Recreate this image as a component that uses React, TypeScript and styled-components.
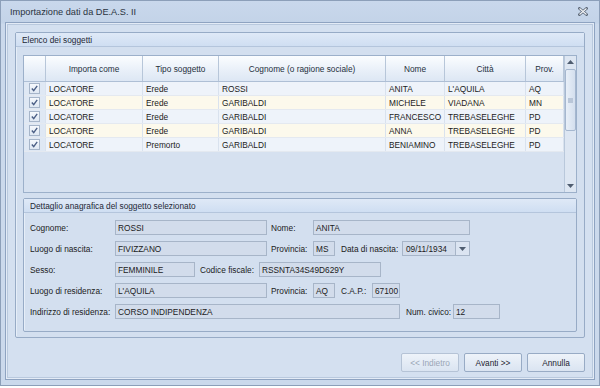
import { ReactNode } from "react";
import styled, { createGlobalStyle } from "styled-components";

const GlobalStyle = createGlobalStyle`
  html, body {
    margin: 0;
    padding: 0;
    background: #ffffff;
  }
  body {
    font-family: "Liberation Sans", Arial, sans-serif;
    font-size: 8.3px;
    color: #1b1b1b;
  }
`;

const Window = styled.div`
  width: 600px;
  height: 386px;
  box-sizing: border-box;
  border: 1px solid #8c9fb9;
  background: linear-gradient(#c9d8ec, #c3d3e8 22px, #cbd9ec 23px);
  display: flex;
  flex-direction: column;
`;

const TitleBar = styled.div`
  height: 21px;
  display: flex;
  align-items: center;
  justify-content: space-between;
  padding: 0 9px 0 9px;
  font-size: 9.2px;
  color: #2a3340;
`;

const CloseButton = styled.div`
  width: 12px;
  height: 12px;
  display: flex;
  align-items: center;
  justify-content: center;
  margin-right: 1px;
`;

const Body = styled.div`
  flex: 1;
  margin: 0 4px 5px 4px;
  border: 1px solid #8ea3c1;
  box-shadow: inset 0 0 0 1px #e3ebf6, inset 0 0 0 2px #b9c9de;
  background: #d4e0f0;
  display: flex;
  flex-direction: column;
  padding: 9px 9px 7px 9px;
`;

const Group = styled.div`
  border: 1px solid #97abc6;
  border-radius: 2px;
  background: #d3dfef;
  box-shadow: inset 1px 1px 0 #e6eef8;
  display: flex;
  flex-direction: column;
`;

const GroupHeader = styled.div`
  height: 13px;
  display: flex;
  align-items: center;
  padding-left: 6px;
  background: linear-gradient(#dfe9f7, #cfdef2);
  border-bottom: 1px solid #b4c5dc;
  color: #1e2835;
`;

const ListArea = styled.div`
  padding: 8px 7px 5px 7px;
  display: flex;
  flex-direction: column;
  gap: 5px;
`;

const GridBox = styled.div`
  height: 136px;
  border: 1px solid #9cb0ca;
  background: #d6e1f0;
  display: flex;
`;

const Table = styled.div`
  flex: 1;
  display: flex;
  flex-direction: column;
`;

const cols = "22px 97px 76px 167px 59px 81px 38px";

const HeaderRow = styled.div`
  display: grid;
  grid-template-columns: ${cols};
  height: 25px;
  background: linear-gradient(#fbfdff, #e8eff8 60%, #dde7f4);
  border-bottom: 1px solid #aebfd5;
`;

const HeaderCell = styled.div`
  display: flex;
  align-items: center;
  justify-content: center;
  border-right: 1px solid #b7c6d9;
  color: #25303d;
`;

const Row = styled.div<{ $alt: boolean }>`
  display: grid;
  grid-template-columns: ${cols};
  height: 14px;
  background: ${(p) => (p.$alt ? "#fcf9ec" : "#eef3fa")};
  border-bottom: 1px solid #e4e9f0;
  box-sizing: border-box;
`;

const Cell = styled.div<{ $first?: boolean }>`
  display: flex;
  align-items: center;
  justify-content: ${(p) => (p.$first ? "center" : "flex-start")};
  padding-left: ${(p) => (p.$first ? "0" : "3px")};
  border-right: 1px solid #d9e2ee;
  white-space: nowrap;
  overflow: hidden;
  background: ${(p) => (p.$first ? "#dfe8f4" : "transparent")};
`;

const Check = styled.div`
  width: 9px;
  height: 9px;
  border: 1px solid #a6b5c9;
  background: linear-gradient(#f6f9fd, #dfe8f3);
  display: flex;
  align-items: center;
  justify-content: center;
`;

const ScrollBar = styled.div`
  width: 12px;
  border-left: 1px solid #b9c8db;
  background: #dde6f2;
  display: flex;
  flex-direction: column;
  align-items: center;
`;

const ScrollArrow = styled.div`
  height: 12px;
  display: flex;
  align-items: center;
  justify-content: center;
`;

const ScrollThumb = styled.div`
  margin-top: 1px;
  width: 9px;
  height: 60px;
  border: 1px solid #a5b7cf;
  border-radius: 2px;
  background: linear-gradient(90deg, #e8eff8, #d4dfee);
  display: flex;
  align-items: center;
  justify-content: center;
`;

const ScrollTrack = styled.div`
  flex: 1;
`;

const Detail = styled(Group)`
  height: 132px;
`;

const Fields = styled.div`
  padding: 7px 6px;
  display: flex;
  flex-direction: column;
  gap: 6px;
`;

const FieldRow = styled.div`
  display: flex;
  align-items: center;
  height: 15px;
`;

const Label = styled.div<{ $w: number; $ml?: number }>`
  width: ${(p) => p.$w}px;
  margin-left: ${(p) => p.$ml ?? 0}px;
  white-space: nowrap;
  flex-shrink: 0;
`;

const Input = styled.div<{ $w: number }>`
  width: ${(p) => p.$w}px;
  height: 15px;
  box-sizing: border-box;
  border: 1px solid #a7b5c8;
  background: #d2dceb;
  display: flex;
  align-items: center;
  padding-left: 2px;
  white-space: nowrap;
  flex-shrink: 0;
`;

const DateInput = styled(Input)`
  padding-left: 0;
  justify-content: space-between;
  span {
    padding-left: 3px;
  }
`;

const DropButton = styled.div`
  width: 13px;
  height: 13px;
  border-left: 1px solid #a7b5c8;
  display: flex;
  align-items: center;
  justify-content: center;
  background: #dbe4f1;
`;

const ButtonBar = styled.div`
  margin-top: auto;
  display: flex;
  justify-content: flex-end;
  gap: 5px;
`;

const Button = styled.button<{ $disabled?: boolean }>`
  width: 58px;
  height: 19px;
  border: 1px solid ${(p) => (p.$disabled ? "#b5c3d6" : "#98abc5")};
  border-radius: 2px;
  background: linear-gradient(#eef3fa, #dae4f1);
  font-family: inherit;
  font-size: 8.3px;
  color: ${(p) => (p.$disabled ? "#9aa6b6" : "#1c2430")};
  padding: 0;
`;

const DownArrow = () => (
  <svg width="7" height="4" viewBox="0 0 7 4">
    <path d="M0 0h7L3.5 4z" fill="#4f5d70" />
  </svg>
);

const UpArrow = () => (
  <svg width="7" height="4" viewBox="0 0 7 4">
    <path d="M0 4h7L3.5 0z" fill="#4f5d70" />
  </svg>
);

const CheckMark = () => (
  <svg width="7" height="7" viewBox="0 0 7 7">
    <path d="M0.8 3.6 L2.7 5.6 L6.2 0.9" stroke="#4b5f86" strokeWidth="1.4" fill="none" />
  </svg>
);

const CloseIcon = () => (
  <svg width="10" height="9" viewBox="0 0 10 9">
    <path d="M1.5 1.5 L8.5 7.5 M8.5 1.5 L1.5 7.5" stroke="#5c6878" strokeWidth="2.8" strokeLinecap="square" />
    <path d="M1.5 1.5 L8.5 7.5 M8.5 1.5 L1.5 7.5" stroke="#f4f6f9" strokeWidth="1.1" />
  </svg>
);

const headers = ["", "Importa come", "Tipo soggetto", "Cognome (o ragione sociale)", "Nome", "Città", "Prov."];

const rows = [
  ["LOCATORE", "Erede", "ROSSI", "ANITA", "L'AQUILA", "AQ"],
  ["LOCATORE", "Erede", "GARIBALDI", "MICHELE", "VIADANA", "MN"],
  ["LOCATORE", "Erede", "GARIBALDI", "FRANCESCO", "TREBASELEGHE", "PD"],
  ["LOCATORE", "Erede", "GARIBALDI", "ANNA", "TREBASELEGHE", "PD"],
  ["LOCATORE", "Premorto", "GARIBALDI", "BENIAMINO", "TREBASELEGHE", "PD"],
];

function Box({ w, children }: { w: number; children?: ReactNode }) {
  return <Input $w={w}>{children}</Input>;
}

export default function App() {
  return (
    <>
      <GlobalStyle />
      <Window>
        <TitleBar>
          <span>Importazione dati da DE.A.S. II</span>
          <CloseButton>
            <CloseIcon />
          </CloseButton>
        </TitleBar>
        <Body>
          <Group>
            <GroupHeader>Elenco dei soggetti</GroupHeader>
            <ListArea>
              <GridBox>
                <Table>
                  <HeaderRow>
                    {headers.map((h, i) => (
                      <HeaderCell key={i}>{h}</HeaderCell>
                    ))}
                  </HeaderRow>
                  {rows.map((r, i) => (
                    <Row key={i} $alt={i % 2 === 1}>
                      <Cell $first>
                        <Check>
                          <CheckMark />
                        </Check>
                      </Cell>
                      {r.map((c, j) => (
                        <Cell key={j}>{c}</Cell>
                      ))}
                    </Row>
                  ))}
                </Table>
                <ScrollBar>
                  <ScrollArrow>
                    <UpArrow />
                  </ScrollArrow>
                  <ScrollThumb>
                    <svg width="5" height="5" viewBox="0 0 5 5">
                      <rect x="0" y="0" width="5" height="5" fill="#b9c6d8" />
                    </svg>
                  </ScrollThumb>
                  <ScrollTrack />
                  <ScrollArrow>
                    <DownArrow />
                  </ScrollArrow>
                </ScrollBar>
              </GridBox>
              <Detail>
                <GroupHeader>Dettaglio anagrafica del soggetto selezionato</GroupHeader>
                <Fields>
                  <FieldRow>
                    <Label $w={85}>Cognome:</Label>
                    <Box w={152}>ROSSI</Box>
                    <Label $w={42} $ml={4}>Nome:</Label>
                    <Box w={157}>ANITA</Box>
                  </FieldRow>
                  <FieldRow>
                    <Label $w={85}>Luogo di nascita:</Label>
                    <Box w={152}>FIVIZZANO</Box>
                    <Label $w={42} $ml={4}>Provincia:</Label>
                    <Box w={22}>MS</Box>
                    <Label $w={61} $ml={6}>Data di nascita:</Label>
                    <DateInput $w={68}>
                      <span>09/11/1934</span>
                      <DropButton>
                        <DownArrow />
                      </DropButton>
                    </DateInput>
                  </FieldRow>
                  <FieldRow>
                    <Label $w={85}>Sesso:</Label>
                    <Box w={80}>FEMMINILE</Box>
                    <Label $w={59} $ml={5}>Codice fiscale:</Label>
                    <Box w={122}>RSSNTA34S49D629Y</Box>
                  </FieldRow>
                  <FieldRow>
                    <Label $w={85}>Luogo di residenza:</Label>
                    <Box w={152}>L'AQUILA</Box>
                    <Label $w={42} $ml={4}>Provincia:</Label>
                    <Box w={22}>AQ</Box>
                    <Label $w={31} $ml={6}>C.A.P.:</Label>
                    <Box w={28}>67100</Box>
                  </FieldRow>
                  <FieldRow>
                    <Label $w={85}>Indirizzo di residenza:</Label>
                    <Box w={285}>CORSO INDIPENDENZA</Box>
                    <Label $w={47} $ml={6}>Num. civico:</Label>
                    <Box w={47}>12</Box>
                  </FieldRow>
                </Fields>
              </Detail>
            </ListArea>
          </Group>
          <ButtonBar>
            <Button $disabled>&lt;&lt; Indietro</Button>
            <Button>Avanti &gt;&gt;</Button>
            <Button>Annulla</Button>
          </ButtonBar>
        </Body>
      </Window>
    </>
  );
}
